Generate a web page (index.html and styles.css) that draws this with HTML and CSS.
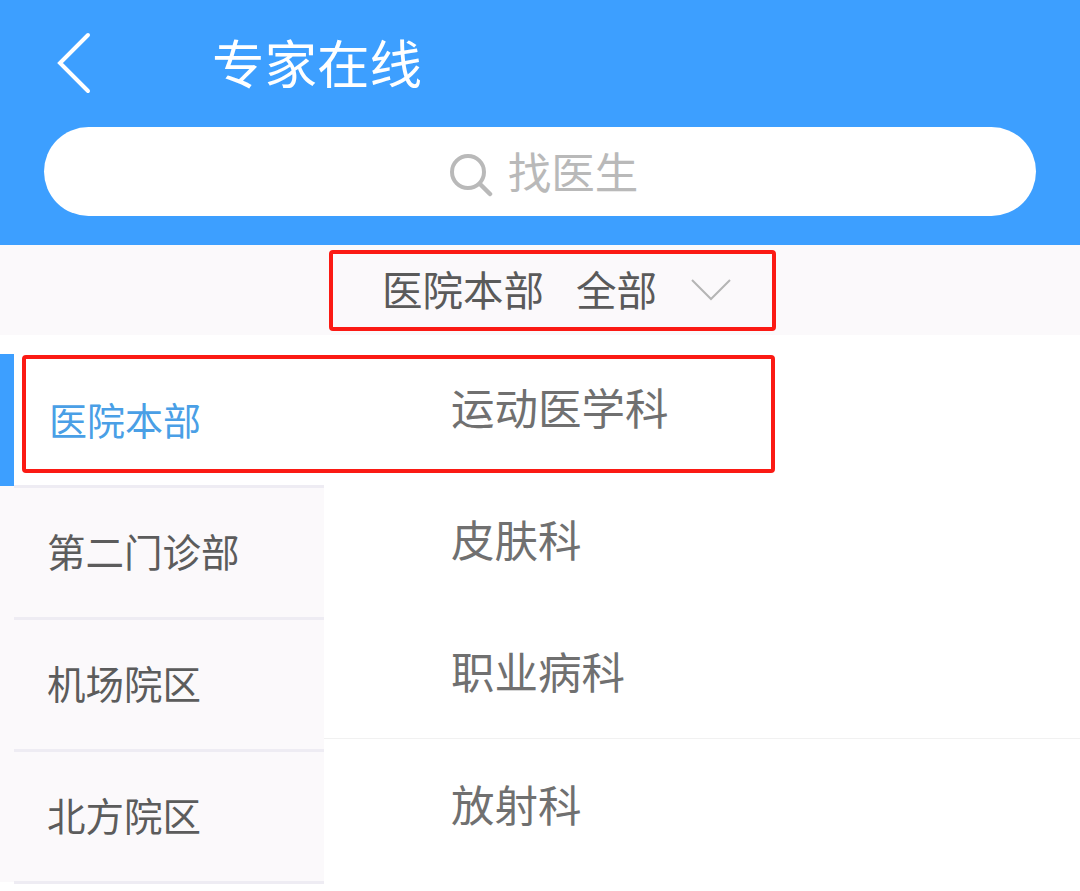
FILE: index.html
```html
<!DOCTYPE html>
<html lang="zh-CN">
<head>
<meta charset="utf-8">
<title>专家在线</title>
<link rel="stylesheet" href="styles.css">
</head>
<body>
<div class="page">
  <header class="header">
    <div class="topbar">
      <svg class="back" viewBox="0 0 40 64" width="40" height="64"><path d="M33 4 L5 32 L33 60" fill="none" stroke="#fff" stroke-width="4" stroke-linecap="round" stroke-linejoin="miter"/></svg>
      <h1 class="title">专家在线</h1>
    </div>
    <div class="search">
      <svg class="search-icon" viewBox="0 0 44 44" width="44" height="44"><circle cx="19" cy="19" r="16" fill="none" stroke="#b9b9b9" stroke-width="4"/><path d="M31 31 L41 41" fill="none" stroke="#b9b9b9" stroke-width="4.5" stroke-linecap="round"/></svg>
      <span class="search-text">找医生</span>
    </div>
  </header>
  <div class="filter">
    <span class="filter-text">医院本部</span>
    <span class="filter-text filter-second">全部</span>
    <svg class="chevron" viewBox="0 0 40 24" width="40" height="24"><path d="M1 2 L20 21 L39 2" fill="none" stroke="#b5b5b5" stroke-width="2"/></svg>
  </div>
  <main class="main">
    <nav class="side">
      <div class="side-item active">医院本部</div>
      <div class="side-item">第二门诊部</div>
      <div class="side-item">机场院区</div>
      <div class="side-item">北方院区</div>
    </nav>
    <section class="depts">
      <div class="dept">运动医学科</div>
      <div class="dept">皮肤科</div>
      <div class="dept divided">职业病科</div>
      <div class="dept">放射科</div>
    </section>
  </main>
  <div class="mark mark-filter"></div>
  <div class="mark mark-row"></div>
</div>
</body>
</html>
```
FILE: styles.css
```css
* { box-sizing: border-box; }
html, body { margin: 0; padding: 0; background: #fff; }
body { font-family: "Noto Sans CJK SC", "Noto Sans", sans-serif; }
.page { position: relative; width: 1080px; height: 891px; overflow: hidden; }

.header { height: 245px; background: #3d9fff; padding: 0 44px; }
.topbar { height: 127px; display: flex; align-items: center; }
.back { margin-left: 11px; margin-top: -1px; flex: none; }
.title { margin: -6px 0 0 117px; font-size: 52.5px; line-height: 60px; font-weight: 400; color: #fff; }
.search { height: 89px; border-radius: 45px; background: #fff; display: flex; align-items: center; justify-content: center; gap: 15px; padding-left: 7px; }
.search-icon { margin-top: 6px; flex: none; }
.search-text { font-size: 43.5px; line-height: 50px; color: #b9b9b9; margin-top: -2px; }

.filter { height: 90px; background: #fbf9fb; display: flex; align-items: center; padding-left: 382px; padding-bottom: 2px; }
.filter-text { font-size: 40.5px; line-height: 50px; color: #5a5a5a; }
.filter-second { margin-left: 32px; }
.chevron { margin-left: 34px; margin-top: 2px; flex: none; }

.main { display: flex; align-items: flex-start; }
.side { width: 324px; flex: none; padding-top: 19px; }
.side-item { height: 132px; padding-left: 47px; padding-bottom: 4px; display: flex; align-items: center; font-size: 38.5px; color: #5c5c5c; background: #fbf9fb; position: relative; }
.side-item::after { content: ""; position: absolute; left: 14px; right: 0; bottom: -2px; height: 3px; background: #eeecf3; z-index: 1; }
.side-item.active { background: #fff; color: #4a9fe6; padding-left: 49px; font-size: 38px; }
.side-item.active::before { content: ""; position: absolute; left: 0; top: 0; bottom: 0; width: 14px; background: #3d9fff; }

.depts { flex: 1; padding-top: 7px; }
.dept { height: 132px; padding-left: 127px; padding-bottom: 3px; display: flex; align-items: center; font-size: 43.5px; color: #707070; }
.dept.divided { height: 133px; border-bottom: 1px solid #f1f1f1; }
.dept.divided + .dept { height: 131px; }

.mark { position: absolute; border: 4px solid #fb1a14; border-radius: 4px; }
.mark-filter { left: 329px; top: 250px; width: 447px; height: 81px; }
.mark-row { left: 22px; top: 355px; width: 753px; height: 118px; }
```
